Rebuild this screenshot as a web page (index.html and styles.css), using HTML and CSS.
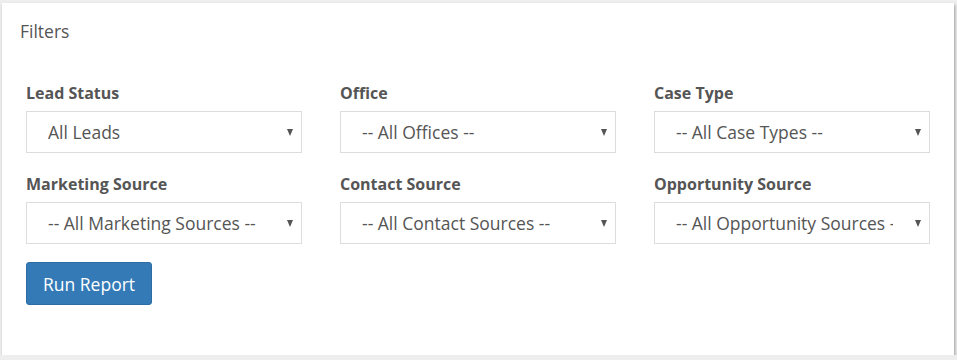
FILE: index.html
```html
<!DOCTYPE html>
<html lang="en">
<head>
    <meta charset="UTF-8">
    <title>Report Filters</title>
    <link rel="stylesheet" href="styles.css">
</head>
<body>

<div class="panel">
    <div class="panel-heading">Filters</div>

    <form class="panel-body">
        <div class="filter-grid">
            <div class="field">
                <label class="field-label">Lead Status</label>
                <div class="select-wrap">
                    <select class="select">
                        <option>All Leads</option>
                    </select>
                </div>
            </div>
            <div class="field">
                <label class="field-label">Office</label>
                <div class="select-wrap">
                    <select class="select">
                        <option>-- All Offices --</option>
                    </select>
                </div>
            </div>
            <div class="field">
                <label class="field-label">Case Type</label>
                <div class="select-wrap">
                    <select class="select">
                        <option>-- All Case Types --</option>
                    </select>
                </div>
            </div>
            <div class="field">
                <label class="field-label">Marketing Source</label>
                <div class="select-wrap">
                    <select class="select">
                        <option>-- All Marketing Sources --</option>
                    </select>
                </div>
            </div>
            <div class="field">
                <label class="field-label">Contact Source</label>
                <div class="select-wrap">
                    <select class="select">
                        <option>-- All Contact Sources --</option>
                    </select>
                </div>
            </div>
            <div class="field">
                <label class="field-label">Opportunity Source</label>
                <div class="select-wrap">
                    <select class="select">
                        <option>-- All Opportunity Sources --</option>
                    </select>
                </div>
            </div>
        </div>

        <button type="button" class="button">Run Report</button>
    </form>
</div>

</body>
</html>
```

FILE: styles.css
```css
body {
    font-family: "Open Sans", "Liberation Sans", sans-serif;
    margin: 0;
    padding: 3px 3px 0 2px;
    background-color: #eeeeee;
    color: #555555;
}
.panel {
    background-color: #ffffff;
    height: 352px;
    box-sizing: border-box;
    padding-top: 16px;
    box-shadow: 1px 2px 3px rgba(0, 0, 0, 0.35);
}
.panel-heading {
    padding: 0 18px;
    font-size: 17.5px;
    line-height: 24px;
}
.panel-body {
    margin-top: 40px;
    padding: 0 24px;
}
.filter-grid {
    display: grid;
    grid-template-columns: repeat(3, 1fr);
    column-gap: 38px;
}
.field {
    margin-bottom: 21px;
}
.field-label {
    display: block;
    font-size: 16px;
    font-weight: bold;
    line-height: 20px;
    margin-bottom: 8px;
}
.select-wrap {
    position: relative;
}
/* small caret drawn over the select */
.select-wrap::after {
    content: "";
    position: absolute;
    right: 9px;
    top: 18px;
    border-left: 3.5px solid transparent;
    border-right: 3.5px solid transparent;
    border-top: 7px solid #555555;
    pointer-events: none;
}
.select {
    -webkit-appearance: none;
    appearance: none;
    display: block;
    width: 100%;
    height: 42px;
    padding: 0 36px 0 21px;
    border: 1px solid #dddddd;
    border-radius: 0;
    background-color: #ffffff;
    font-family: inherit;
    font-size: 17.5px;
    color: #555555;
}
.button {
    margin-top: -3px;
    height: 43px;
    padding: 0 16px;
    font-family: inherit;
    font-size: 17.5px;
    color: #ffffff;
    background-color: #337ab7;
    border: 1px solid #2e6da4;
    border-radius: 3px;
}
```
